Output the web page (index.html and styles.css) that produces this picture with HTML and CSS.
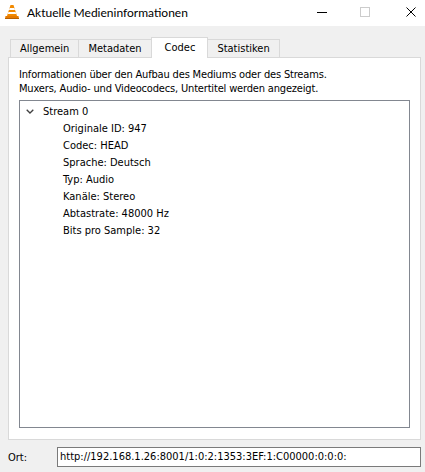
FILE: index.html
```html
<!DOCTYPE html>
<html lang="de">
<head>
<meta charset="utf-8">
<title>Aktuelle Medieninformationen</title>
<link rel="stylesheet" href="styles.css">
</head>
<body>
<div class="titlebar">
  <svg class="app-icon" viewBox="0 0 16 16" width="16" height="16">
    <polygon points="6.5,1 9.5,1 13,12 3,12" fill="#f28a00"/>
    <polygon points="5.6,4 10.4,4 11,6 5,6" fill="#ffffff"/>
    <polygon points="4.4,8 11.6,8 12.2,10 3.8,10" fill="#ffffff"/>
    <polygon points="1.5,12 14.5,12 15,15 1,15" fill="#e57a00"/>
    <rect x="1" y="14" width="14" height="1" fill="#b85f00"/>
  </svg>
  <span class="title">Aktuelle Medieninformationen</span>
  <div class="controls">
    <span class="ctl ctl-min"><svg viewBox="0 0 10 10" width="10" height="10"><line x1="0" y1="5.5" x2="10" y2="5.5" stroke="#000" stroke-width="1"/></svg></span>
    <span class="ctl ctl-max"><svg viewBox="0 0 10 10" width="10" height="10"><rect x="0.5" y="0.5" width="9" height="9" fill="none" stroke="#cccccc" stroke-width="1"/></svg></span>
    <span class="ctl ctl-close"><svg viewBox="0 0 10 10" width="10" height="10"><path d="M0.5 0.5 L9.5 9.5 M9.5 0.5 L0.5 9.5" stroke="#000" stroke-width="1"/></svg></span>
  </div>
</div>
<div class="content">
  <div class="tabs">
    <div class="tab">Allgemein</div>
    <div class="tab">Metadaten</div>
    <div class="tab tab-active">Codec</div>
    <div class="tab tab-last">Statistiken</div>
  </div>
  <div class="panel">
    <p class="desc">Informationen über den Aufbau des Mediums oder des Streams.<br>Muxers, Audio- und Videocodecs, Untertitel werden angezeigt.</p>
    <div class="tree">
      <div class="row row-parent"><svg class="chevron" viewBox="0 0 8 5" width="8" height="5"><polyline points="0.7,0.7 4,4 7.3,0.7" fill="none" stroke="#404040" stroke-width="1.3"/></svg><span>Stream 0</span></div>
      <div class="row row-child">Originale ID: 947</div>
      <div class="row row-child">Codec: HEAD</div>
      <div class="row row-child">Sprache: Deutsch</div>
      <div class="row row-child">Typ: Audio</div>
      <div class="row row-child">Kanäle: Stereo</div>
      <div class="row row-child">Abtastrate: 48000 Hz</div>
      <div class="row row-child">Bits pro Sample: 32</div>
    </div>
  </div>
  <div class="location">
    <span class="loc-label">Ort:</span>
    <div class="loc-input">http://192.168.1.26:8001/1:0:2:1353:3EF:1:C00000:0:0:0:</div>
  </div>
</div>
</body>
</html>
```
FILE: styles.css
```css
html, body {
  margin: 0;
  padding: 0;
}
body {
  width: 425px;
  height: 472px;
  overflow: hidden;
  background: #f0f0f0;
  font-family: "DejaVu Sans Condensed", Lato, sans-serif;
  font-size: 11px;
  color: #000;
}
.titlebar {
  height: 26px;
  background: #fff;
  display: flex;
  align-items: center;
  font-family: Lato, "Open Sans", sans-serif;
  font-size: 12px;
}
.app-icon {
  margin-left: 4px;
  margin-right: 7px;
  margin-top: -3px;
  flex: none;
}
.title {
  margin-top: -2px;
}
.controls {
  margin-left: auto;
  display: flex;
  align-items: center;
  margin-top: -2px;
}
.ctl {
  display: flex;
}
.ctl-min { margin-right: 33px; }
.ctl-max { margin-right: 36px; }
.ctl-close { margin-right: 9px; }

.content {
  padding: 11px 4px 0 8px;
}
.tabs {
  display: flex;
  align-items: flex-end;
  height: 20px;
  padding-left: 2px;
}
.tab {
  height: 18px;
  line-height: 17px;
  padding: 0 9px;
  border: 1px solid #d9d9d9;
  border-right: none;
  border-bottom: none;
  background: #f0f0f0;
  box-sizing: border-box;
}
.tab-last {
  border-right: 1px solid #d9d9d9;
}
.tab-active {
  height: 21px;
  line-height: 19px;
  padding: 0 12px 0 13px;
  background: #fff;
  border-right: 1px solid #d9d9d9;
  margin-bottom: -1px;
  position: relative;
  z-index: 1;
}
.tab-active + .tab {
  border-left: none;
}
.panel {
  height: 383px;
  box-sizing: border-box;
  background: #fff;
  border: 1px solid #d9d9d9;
  padding: 10px 10px 0 10px;
}
.desc {
  margin: 0;
  line-height: 14px;
  letter-spacing: -0.17px;
}
.tree {
  margin-top: 4px;
  height: 328px;
  box-sizing: border-box;
  border: 1px solid #828790;
  padding-top: 2px;
}
.row {
  height: 17px;
  line-height: 17px;
  white-space: nowrap;
}
.row-parent {
  display: flex;
  align-items: center;
  padding-left: 6px;
}
.chevron {
  margin-right: 9px;
  flex: none;
}
.row-child {
  padding-left: 43px;
}
.location {
  display: flex;
  align-items: center;
  margin-top: 7px;
}
.loc-label {
  width: 49px;
  flex: none;
  padding-top: 1px;
}
.loc-input {
  width: 365px;
  height: 20px;
  box-sizing: border-box;
  border: 1px solid #7a7a7a;
  background: #fff;
  line-height: 18px;
  padding-left: 2px;
  white-space: nowrap;
  overflow: hidden;
}
```
